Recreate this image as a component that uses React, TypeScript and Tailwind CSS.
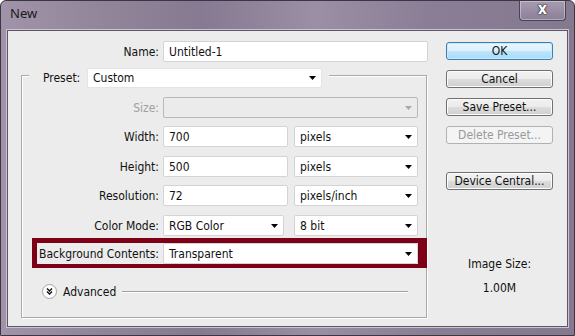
import React from "react";

const FONT = { fontFamily: '"DejaVu Sans Condensed", "DejaVu Sans", Tahoma, sans-serif', fontStretch: "condensed" as const };

function Arrow({ gray = false }: { gray?: boolean }) {
  return (
    <svg width="7" height="4" viewBox="0 0 7 4" className="shrink-0">
      <path d="M0 0H7L3.5 4Z" fill={gray ? "#a8a8a8" : "#000"} />
    </svg>
  );
}

function Field({ w, text, select = false, h = "h-[21px]" }: { w: string; text: string; select?: boolean; h?: string }) {
  return (
    <div className={`${w} ${h} flex items-center justify-between bg-white border border-[#d4d4d4] rounded-[2px] pl-[5px] pr-[5px] shrink-0`}>
      <span className="leading-none">{text}</span>
      {select && <Arrow />}
    </div>
  );
}

function Btn({ label, primary = false, disabled = false, className = "" }: { label: string; primary?: boolean; disabled?: boolean; className?: string }) {
  const base = "w-[107px] h-[18px] flex items-center justify-center rounded-[3px] border leading-none ";
  const style = primary
    ? "border-[#3c7fb1] bg-[linear-gradient(180deg,#eaf6fd_0%,#d9f0fc_50%,#bee6fd_51%,#a7d9f5_100%)] shadow-[inset_0_0_0_1px_#c8eafc]"
    : disabled
    ? "border-[#adb2b5] bg-[#f4f4f4] text-[#9a9a9a]"
    : "border-[#707070] bg-[linear-gradient(180deg,#f2f2f2_0%,#ebebeb_50%,#dddddd_51%,#cfcfcf_100%)] shadow-[inset_0_0_0_1px_#fcfcfc]";
  return <div className={base + style + " " + className}>{label}</div>;
}

function Row({ label, children, gray = false, mt }: { label: string; children: React.ReactNode; gray?: boolean; mt: string }) {
  return (
    <div className={`flex items-center ${mt}`}>
      <div className={`w-[137px] text-right shrink-0 leading-none ${gray ? "text-[#a0a0a0]" : ""}`}>{label}</div>
      <div className="w-[4px] shrink-0" />
      {children}
    </div>
  );
}

export default function App() {
  return (
    <div
      className="w-[575px] h-[336px] border border-[#3b3640] rounded-t-[6px] bg-[linear-gradient(90deg,#a194aa_0%,#918599_18%,#867a92_35%,#9b8fa6_55%,#8a7e96_75%,#857990_100%)] flex flex-col text-[12px] text-[#111]"
      style={FONT}
    >
      {/* title bar */}
      <div className="h-[28px] flex items-start justify-between shrink-0">
        <div className="pl-[9px] pt-[6px] text-[13px] text-[#1a1a1a] leading-none" style={{ fontFamily: '"Noto Sans", "Open Sans", sans-serif' }}>
          New
        </div>
        <div className="mr-[8px] w-[47px] h-[20px] border border-t-0 border-[#4a4254] rounded-b-[4px] shadow-[inset_0_0_0_1px_rgba(255,255,255,0.35)] bg-[linear-gradient(180deg,#a69bb0_0%,#8c8098_100%)] flex items-center justify-center">
          <span
            className="text-white font-bold text-[16px] leading-none -mt-[3px]"
            style={{ fontFamily: '"DejaVu Sans", sans-serif', textShadow: "0 0 1px #222, 0 0 1px #222, 0 0 2px #333" }}
          >
            x
          </span>
        </div>
      </div>

      {/* client area */}
      <div className="mx-[6px] mt-[1px] h-[297px] border border-[#5c5863] shadow-[0_0_0_1px_#cbc3d3] bg-[#ececec] flex">
        {/* left column */}
        <div className="w-[420px] pt-[10px] shrink-0 flex flex-col">
          <div className="flex items-center">
            <div className="w-[151px] text-right leading-none">Name:</div>
            <div className="w-[4px]" />
            <Field w="w-[265px]" text="Untitled-1" />
          </div>

          {/* group box */}
          <div className="ml-[13px] mt-[13px] w-[406px] h-[243px] border border-[#a9a9a9] shadow-[inset_1px_1px_0_#fff,1px_1px_0_#fff] flex flex-col">
            {/* legend */}
            <div className="ml-[7px] -mt-[8px] self-start bg-[#ececec] pl-[14px] pr-[7px] flex items-center">
              <div className="w-[44px] leading-none">Preset:</div>
              <div className="w-[235px] h-[20px] flex items-center justify-between bg-white border border-[#e4e4e4] rounded-[2px] pl-[5px] pr-[5px]">
                <span className="leading-none">Custom</span>
                <Arrow />
              </div>
            </div>

            <Row label="Size:" gray mt="mt-[9px]">
              <div className="w-[255px] h-[21px] flex items-center justify-end bg-[#ebebeb] border border-[#b9b9b9] rounded-[2px] pr-[5px]">
                <Arrow gray />
              </div>
            </Row>

            <Row label="Width:" mt="mt-[8px]">
              <Field w="w-[125px]" text="700" />
              <div className="w-[6px] shrink-0" />
              <Field w="w-[124px]" text="pixels" select />
            </Row>

            <Row label="Height:" mt="mt-[9px]">
              <Field w="w-[125px]" text="500" />
              <div className="w-[6px] shrink-0" />
              <Field w="w-[124px]" text="pixels" select />
            </Row>

            <Row label="Resolution:" mt="mt-[8px]">
              <Field w="w-[125px]" text="72" />
              <div className="w-[6px] shrink-0" />
              <Field w="w-[124px]" text="pixels/inch" select />
            </Row>

            <Row label="Color Mode:" mt="mt-[9px]">
              <Field w="w-[121px]" text="RGB Color" select />
              <div className="w-[10px] shrink-0" />
              <Field w="w-[124px]" text="8 bit" select />
            </Row>

            {/* highlighted row */}
            <div className="ml-[10px] mt-[2px] w-[395px] border-[#7d0016] border-l-[5px] border-t-[5px] border-b-[4px] border-r-[9px] flex items-center bg-[#ececec]">
              <div className="w-[122px] text-right shrink-0 leading-none whitespace-nowrap">Background Contents:</div>
              <div className="w-[4px] shrink-0" />
              <Field w="w-[255px]" text="Transparent" select />
            </div>

            {/* advanced */}
            <div className="ml-[20px] mr-[18px] mt-[16px] flex items-center">
              <svg width="15" height="15" viewBox="0 0 15 15" className="shrink-0">
                <circle cx="7.5" cy="7.5" r="7" fill="#fdfdfd" stroke="#a3a3a3" />
                <path d="M5 4.5L7.5 7L10 4.5M5 7.5L7.5 10L10 7.5" fill="none" stroke="#111" strokeWidth="1.4" />
              </svg>
              <div className="ml-[6px] text-[12px] leading-none">Advanced</div>
              <div className="ml-[6px] flex-1 h-[2px] border-t border-[#a0a0a0] border-b border-b-white" />
            </div>
          </div>
        </div>

        {/* right column */}
        <div className="ml-[18px] pt-[11px] flex flex-col">
          <Btn label="OK" primary />
          <Btn label="Cancel" className="mt-[10px]" />
          <Btn label="Save Preset..." className="mt-[10px]" />
          <Btn label="Delete Preset..." disabled className="mt-[10px]" />
          <Btn label="Device Central..." className="mt-[28px]" />
          <div className="w-[107px] text-center mt-[68px] leading-none">Image Size:</div>
          <div className="w-[107px] text-center mt-[12px] leading-none">1.00M</div>
        </div>
      </div>
    </div>
  );
}
